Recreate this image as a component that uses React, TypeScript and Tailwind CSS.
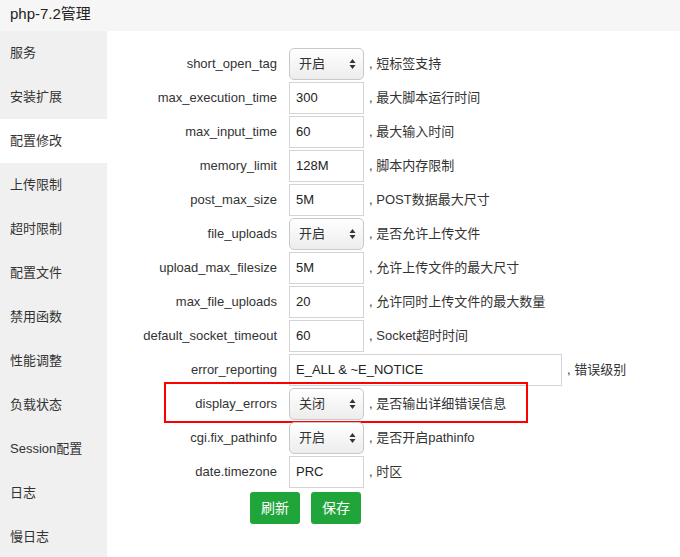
import React from "react";

type Row = {
  name: string;
  value: string;
  type: "input" | "select";
  desc: string;
  wide?: boolean;
  marked?: boolean;
};

const menu = [
  "服务",
  "安装扩展",
  "配置修改",
  "上传限制",
  "超时限制",
  "配置文件",
  "禁用函数",
  "性能调整",
  "负载状态",
  "Session配置",
  "日志",
  "慢日志",
];

const rows: Row[] = [
  { name: "short_open_tag", value: "开启", type: "select", desc: "短标签支持" },
  { name: "max_execution_time", value: "300", type: "input", desc: "最大脚本运行时间" },
  { name: "max_input_time", value: "60", type: "input", desc: "最大输入时间" },
  { name: "memory_limit", value: "128M", type: "input", desc: "脚本内存限制" },
  { name: "post_max_size", value: "5M", type: "input", desc: "POST数据最大尺寸" },
  { name: "file_uploads", value: "开启", type: "select", desc: "是否允许上传文件" },
  { name: "upload_max_filesize", value: "5M", type: "input", desc: "允许上传文件的最大尺寸" },
  { name: "max_file_uploads", value: "20", type: "input", desc: "允许同时上传文件的最大数量" },
  { name: "default_socket_timeout", value: "60", type: "input", desc: "Socket超时时间" },
  { name: "error_reporting", value: "E_ALL & ~E_NOTICE", type: "input", desc: "错误级别", wide: true },
  { name: "display_errors", value: "关闭", type: "select", desc: "是否输出详细错误信息", marked: true },
  { name: "cgi.fix_pathinfo", value: "开启", type: "select", desc: "是否开启pathinfo" },
  { name: "date.timezone", value: "PRC", type: "input", desc: "时区" },
];

function SelectBox({ value }: { value: string }) {
  return (
    <div className="flex h-[32px] w-[75px] items-center justify-between rounded-[5px] border border-[#c8c8c8] bg-gradient-to-b from-white to-[#ededed] pl-[9px] pr-[7px]">
      <span>{value}</span>
      <svg width="7" height="12" viewBox="0 0 7 12">
        <path d="M3.5 1 L6.5 5 L0.5 5 Z" fill="#333" />
        <path d="M3.5 11 L6.5 7 L0.5 7 Z" fill="#333" />
      </svg>
    </div>
  );
}

function FieldRow({ row }: { row: Row }) {
  return (
    <div className="relative mb-[2px] flex h-[32px] items-center">
      {row.marked && (
        <div className="absolute left-[57px] top-[-6px] h-[41px] w-[364px] border-2 border-[#f00]" />
      )}
      <div className="w-[170px] text-right text-[13px] text-[#333]">{row.name}</div>
      <div className="ml-[12px]">
        {row.type === "select" ? (
          <SelectBox value={row.value} />
        ) : (
          <div
            className={`flex h-[32px] items-center border border-[#d4d4d4] pl-[6px] text-[13px] text-[#222] ${
              row.wide ? "w-[273px]" : "w-[75px]"
            }`}
          >
            {row.value}
          </div>
        )}
      </div>
      <div className="ml-[5px] text-[13px] text-[#333]">, {row.desc}</div>
    </div>
  );
}

export default function App() {
  return (
    <div
      className="h-[557px] w-[680px] overflow-hidden bg-white text-[13px] text-[#333]"
      style={{ fontFamily: '"Liberation Sans", "Noto Sans CJK SC", sans-serif' }}
    >
      <div className="flex h-[31px] items-center bg-[#f6f6f6] pb-[3px] pl-[10px] text-[15px] text-[#222]">
        php-7.2管理
      </div>
      <div className="flex">
        <div className="w-[107px] shrink-0 bg-[#f0f0f0]">
          {menu.map((m) => (
            <div
              key={m}
              className={`flex h-[44px] items-center pl-[10px] text-[13px] text-[#333] ${
                m === "配置修改" ? "bg-white" : ""
              }`}
            >
              {m}
            </div>
          ))}
        </div>
        <div className="flex-1 pt-[17px]">
          {rows.map((r) => (
            <FieldRow key={r.name} row={r} />
          ))}
          <div className="ml-[143px] mt-[4px] flex gap-[11px]">
            <button className="h-[32px] w-[50px] rounded-[3px] bg-[#20a53a] text-[14px] text-white">
              刷新
            </button>
            <button className="h-[32px] w-[50px] rounded-[3px] bg-[#20a53a] text-[14px] text-white">
              保存
            </button>
          </div>
        </div>
      </div>
    </div>
  );
}
